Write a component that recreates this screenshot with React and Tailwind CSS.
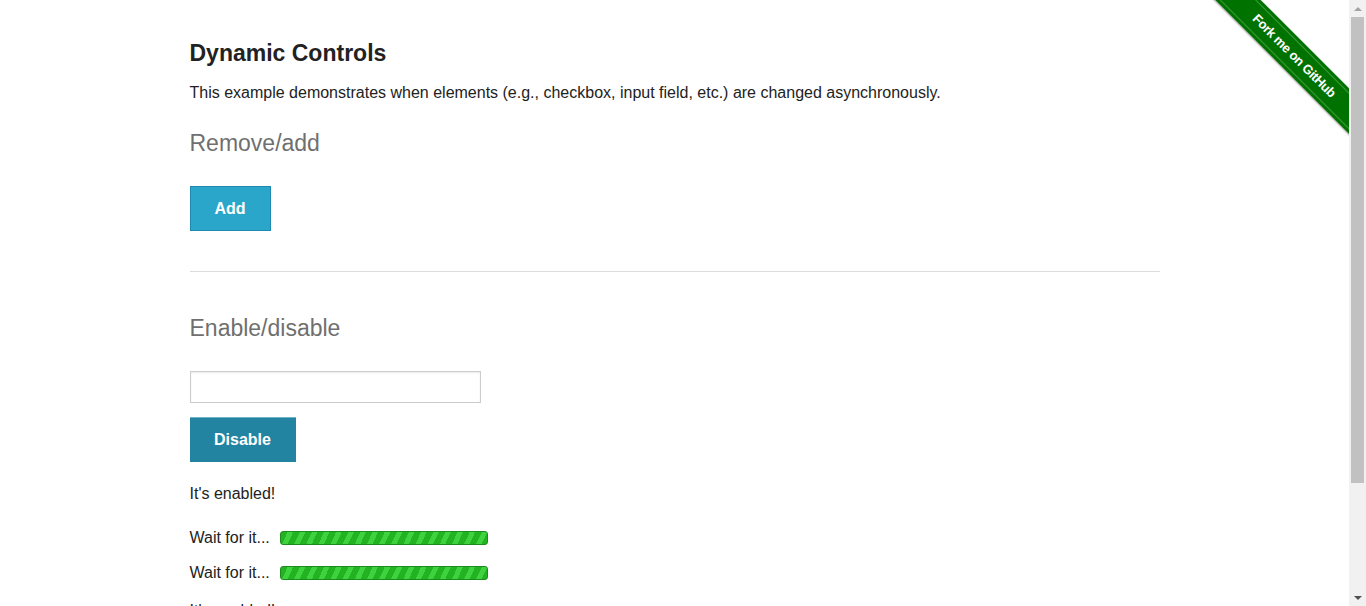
export default function App() {
  const rows = [1, 2];
  return (
    <div className="flex h-[606px] overflow-hidden bg-white text-[#222] font-['Liberation_Sans',Arial,sans-serif]">
      <div className="relative flex-1 h-full overflow-hidden">
        <div className="absolute top-0 right-0 w-[149px] h-[149px] overflow-hidden">
          <div className="absolute left-[-18px] top-[40px] w-[224px] h-[32px] rotate-45 bg-[#007200] flex items-center justify-center shadow-[0_1px_2px_rgba(0,0,0,0.4)]">
            <div className="w-full h-[26px] border-y border-[#3b9a3b] flex items-center justify-center text-white text-[13px] font-bold tracking-tight">
              Fork me on GitHub
            </div>
          </div>
        </div>

        <div className="max-w-[970px] mx-auto pt-[38px]">
          <h3 className="text-[23px] font-bold leading-[30px]">Dynamic Controls</h3>
          <p className="mt-[13px] text-[16px] leading-[24px]">
            This example demonstrates when elements (e.g., checkbox, input field, etc.) are changed asynchronously.
          </p>

          <h4 className="mt-[23px] text-[23px] leading-[30px] text-[#6f6f6f]">Remove/add</h4>
          <div className="mt-[28px]">
            <button className="w-[81px] h-[45px] bg-[#2ba6cb] border border-[#1e8ab0] text-white text-[16px] font-bold">
              Add
            </button>
          </div>

          <hr className="mt-[40px] border-t border-[#dddddd]" />

          <h4 className="mt-[41px] text-[23px] leading-[30px] text-[#6f6f6f]">Enable/disable</h4>
          <div className="mt-[28px]">
            <input type="text" className="w-[291px] h-[32px] border border-[#cccccc] shadow-[inset_0_1px_2px_rgba(0,0,0,0.08)]" />
          </div>
          <div className="mt-[14px]">
            <button className="w-[106px] h-[45px] bg-[#2284a1] border-t border-[#6fb4c8] text-white text-[16px] font-bold">
              Disable
            </button>
          </div>

          <p className="mt-[20px] text-[16px] leading-[24px]">It's enabled!</p>

          <div className="mt-[20px] flex flex-col gap-[11px]">
            {rows.map((r) => (
              <div key={r} className="flex items-center h-[24px]">
                <span className="text-[16px] w-[90px]">Wait for it...</span>
                <div className="w-[208px] h-[14px] rounded-[3px] border border-[#1c8a1c] bg-[repeating-linear-gradient(115deg,#22b222_0px,#22b222_6px,#3fd23f_6px,#3fd23f_11px)]" />
              </div>
            ))}
          </div>

          <p className="mt-[14px] text-[16px] leading-[24px]">It's enabled!</p>
        </div>
      </div>

      {/* page scrollbar */}
      <div className="w-[17px] h-full bg-[#f1f1f1] flex flex-col items-center">
        <div className="h-[17px] flex items-center justify-center">
          <div className="w-0 h-0 border-x-[4px] border-x-transparent border-b-[4px] border-b-[#a3a3a3]" />
        </div>
        <div className="w-[13px] h-[466px] bg-[#c1c1c1]" />
        <div className="flex-1" />
        <div className="h-[17px] flex items-center justify-center">
          <div className="w-0 h-0 border-x-[4px] border-x-transparent border-t-[4px] border-t-[#505050]" />
        </div>
      </div>
    </div>
  );
}
